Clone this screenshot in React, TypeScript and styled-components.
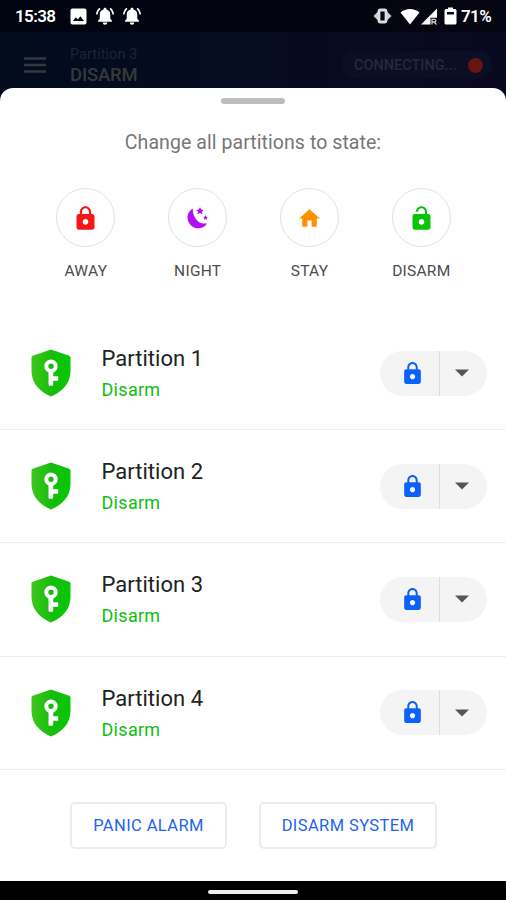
import React from 'react';
import styled, { createGlobalStyle } from 'styled-components';

const Global = createGlobalStyle`
  *, *::before, *::after { box-sizing: border-box; }
  body { margin: 0; background: #000; font-family: Roboto, "Liberation Sans", sans-serif; }
  svg { display: block; flex: none; }
  button { font-family: inherit; padding: 0; border: 0; background: none; }
`;

const Screen = styled.div`
  width: 506px;
  height: 900px;
  display: flex;
  flex-direction: column;
  overflow: hidden;
  background: linear-gradient(90deg, #020c1d 0%, #050b20 45%, #080a22 80%, #0a0820 100%) 0 0 / 100% 130px no-repeat #000;
`;

const StatusBar = styled.div`
  height: 32px;
  flex: none;
  display: flex;
  align-items: center;
  padding: 0 14px 0 15px;
  background: linear-gradient(90deg, #010511, #03040f 50%, #060512);
  color: #fff;
  font-size: 17px;
  font-weight: 600;
`;

const Clock = styled.span`
  width: 55px;
  letter-spacing: -0.6px;
`;

const StatusGroup = styled.div<{ $gap: number }>`
  display: flex;
  align-items: center;
  gap: ${(p) => p.$gap}px;
`;

const StatusRight = styled.div`
  display: flex;
  align-items: center;
  margin-left: auto;
`;

const Gap = styled.span<{ $w: number }>`
  width: ${(p) => p.$w}px;
`;

const Percent = styled.span`
  width: 31px;
  font-size: 17px;
  letter-spacing: -0.6px;
  white-space: nowrap;
`;

const Header = styled.header`
  height: 56px;
  flex: none;
  display: flex;
  align-items: center;
  padding: 10px 14px 0 24px;
`;

const Heading = styled.div`
  margin-left: 24px;
`;

const HeadingSmall = styled.div`
  font-size: 14.5px;
  line-height: 20px;
  letter-spacing: 0.05px;
  color: #1b2537;
`;

const HeadingLarge = styled.div`
  font-size: 18.5px;
  line-height: 21px;
  font-weight: 500;
  letter-spacing: -0.2px;
  color: #36383c;
`;

const Connection = styled.div`
  width: 151px;
  height: 28px;
  margin: 0 0 0 auto;
  display: flex;
  align-items: center;
  justify-content: space-between;
  padding: 0 9px 0 13px;
  border-radius: 14px;
  background: #0b0f25;
  color: #25293a;
  font-size: 14.5px;
  font-weight: 500;
`;

const Dot = styled.span`
  width: 15px;
  height: 15px;
  border-radius: 50%;
  background: #671510;
`;

const Sheet = styled.main`
  height: 793px;
  flex: none;
  display: flex;
  flex-direction: column;
  background: #fff;
  border-radius: 13px 13px 0 0;
`;

const Handle = styled.div`
  width: 64px;
  height: 6px;
  flex: none;
  margin: 10px auto 0;
  border-radius: 3px;
  background: #bdbdbd;
`;

const Title = styled.h1`
  margin: 26px 0 0;
  height: 26px;
  line-height: 26px;
  text-align: center;
  font-size: 19.5px;
  font-weight: 400;
  letter-spacing: 0.07px;
  color: #777;
`;

const States = styled.div`
  display: grid;
  grid-template-columns: repeat(4, 111.8px);
  margin: 32px 0 0 30px;
  height: 129px;
  flex: none;
`;

const StateItem = styled.div`
  display: flex;
  flex-direction: column;
  align-items: center;
`;

const Circle = styled.button`
  width: 59px;
  height: 59px;
  display: flex;
  align-items: center;
  justify-content: center;
  padding-top: 1px;
  border: 1px solid #e2e2e2;
  border-radius: 50%;
`;

const StateLabel = styled.span`
  margin-top: 14px;
  line-height: 20px;
  font-size: 15.5px;
  font-weight: 440;
  letter-spacing: 0.25px;
  color: #4c4c4c;
`;

const Row = styled.div`
  height: 113.2px;
  flex: none;
  display: flex;
  align-items: center;
  padding: 0 19px 0 31px;
  border-bottom: 1.5px solid #eeeeee;
`;

const RowText = styled.div`
  flex: 1;
  margin-left: 30.5px;
  padding-top: 2px;
`;

const Name = styled.div`
  font-size: 22px;
  line-height: 31px;
  letter-spacing: 0.02px;
  color: #222;
`;

const Status = styled.div`
  font-size: 18px;
  line-height: 31px;
  letter-spacing: 0.3px;
  color: #12bd12;
`;

const Split = styled.div`
  display: flex;
  width: 107px;
  height: 45px;
  border-radius: 23px;
  overflow: hidden;
  background: #f4f4f4;
`;

const SplitButton = styled.button<{ $w: number; $line?: boolean }>`
  width: ${(p) => p.$w}px;
  display: flex;
  align-items: center;
  justify-content: center;
  padding-left: ${(p) => (p.$line ? 5 : 0)}px;
  padding-right: ${(p) => (p.$line ? 0 : 3)}px;
  border-right: ${(p) => (p.$line ? '1.5px solid #dedede' : '0')};
`;

const Actions = styled.div`
  display: flex;
  gap: 32px;
  padding: 32px 0 0 70px;
`;

const Action = styled.button<{ $w: number }>`
  width: ${(p) => p.$w}px;
  height: 47px;
  border: 2px solid #ececec;
  border-radius: 5px;
  color: #1f64ee;
  font-size: 16.5px;
  letter-spacing: 0.4px;
  font-weight: 450;
`;

const NavBar = styled.div`
  flex: 1;
  display: flex;
  justify-content: center;
  align-items: flex-start;
  padding-top: 9px;
  background: #000;
`;

const NavPill = styled.div`
  width: 90px;
  height: 4px;
  border-radius: 2px;
  background: #eee;
`;

const LOCK =
  'M18 8h-1V6c0-2.76-2.24-5-5-5S7 3.24 7 6v2H6c-1.1 0-2 .9-2 2v10c0 1.1.9 2 2 2h12c1.1 0 2-.9 2-2V10c0-1.1-.9-2-2-2zm-6 9.500c-1.400 0-2.500-1.100-2.500-2.500s1.100-2.500 2.500-2.500 2.500 1.100 2.500 2.500-1.100 2.500-2.500 2.500zm3.100-9.500H8.900V6c0-1.710 1.390-3.100 3.100-3.100s3.100 1.390 3.100 3.100v2z';
const LOCK_OPEN =
  'M12 17.500c1.400 0 2.500-1.100 2.500-2.500s-1.100-2.500-2.500-2.500-2.500 1.100-2.500 2.500 1.100 2.500 2.500 2.500zm6-9.500h-1V6c0-2.760-2.240-5-5-5S7 3.240 7 6h1.900c0-1.710 1.390-3.100 3.100-3.100 1.710 0 3.100 1.390 3.100 3.100v2H6c-1.100 0-2 .9-2 2v10c0 1.100.9 2 2 2h12c1.100 0 2-.9 2-2V10c0-1.100-.9-2-2-2z';
const HOME = 'M10 20v-6h4v6h5v-8h3L12 3 2 12h3v8z';

const Glyph = ({ d, size, color }: { d: string; size: number; color: string }) => (
  <svg width={size} height={size} viewBox="0 0 24 24" fill={color} fillRule="evenodd">
    <path d={d} />
  </svg>
);

const Moon = () => (
  <svg width="24" height="24" viewBox="0 0 24 24" fill="#b40cf5">
    <path d="M6.800 2.500C2.900 4.700.9 8.800 1.700 13.200c1 5.500 5.900 9.400 11.300 9.100 3.700-.2 6.700-2.200 8-5.100-3.300 1-6.700.1-9.300-2.300C8.500 12 6.500 7.400 6.800 2.500z" />
    <path d="M14 1.200l1.200 2.300 2.600.4-1.900 1.800.5 2.600L14 7.100l-2.400 1.200.5-2.600-1.900-1.800 2.600-.4z" />
    <path d="M19.500 9.300l.8 1.500 1.600.2-1.200 1.100.3 1.700-1.500-.8-1.500.8.3-1.700-1.200-1.100 1.600-.2z" />
  </svg>
);

const Bell = () => (
  <svg width="18" height="18" viewBox="0 0 24 24" fill="#fff">
    <path d="M12 1c-1.200 0-2 .8-2 2v.4C6.800 4.200 5 7 5 10v5.700L2.800 18v1.800h18.400V18L19 15.700V10c0-3-1.800-5.800-5-6.600V3c0-1.200-.8-2-2-2zM9 20.500a3 3 0 0 0 6 0z" />
    <path d="M5.300 1.800C2.900 3.600 1.200 6.400 1 10M18.700 1.800c2.400 1.800 4.100 4.600 4.300 8.200" fill="none" stroke="#fff" strokeWidth="2" />
  </svg>
);

const Shield = () => (
  <svg width="40" height="48" viewBox="0 0 40 48">
    <defs>
      <linearGradient id="shield" x1="0" y1="0" x2="1" y2="0">
        <stop offset="0" stopColor="#3fc51f" />
        <stop offset=".55" stopColor="#14bd0a" />
        <stop offset="1" stopColor="#08c805" />
      </linearGradient>
    </defs>
    <path d="M20 .5 38.300 6.800Q39.500 7.300 39.500 8.600V22c0 12-8 21-19.500 25.500C8.500 43 .5 34 .5 22V8.600Q.5 7.300 1.700 6.800z" fill="url(#shield)" />
    <path d="M17.500 22h4.700v5.300h5v4.500h-5v3.500q0 1.500-1.200 1.500h-2.300q-1.200 0-1.200-1.500z" fill="#fff" />
    <circle cx="20" cy="17.200" r="4.700" fill="none" stroke="#fff" strokeWidth="4" />
  </svg>
);

const states = [
  { label: 'AWAY', icon: <Glyph d={LOCK} size={27} color="#f81616" /> },
  { label: 'NIGHT', icon: <Moon /> },
  { label: 'STAY', icon: <Glyph d={HOME} size={25} color="#ff9100" /> },
  { label: 'DISARM', icon: <Glyph d={LOCK_OPEN} size={27} color="#06c506" /> },
];

const partitions = ['Partition 1', 'Partition 2', 'Partition 3', 'Partition 4'];

export default function App() {
  return (
    <>
      <Global />
      <Screen>
        <StatusBar>
          <Clock>15:38</Clock>
          <StatusGroup $gap={9}>
            <svg width="17" height="17" viewBox="0 0 17 17">
              <path d="M2.500.5h12q2 0 2 2v12q0 2-2 2h-12q-2 0-2-2v-12q0-2 2-2zM3 13h11l-3.600-4.800-2.600 3.300-1.900-2.200z" fill="#fff" fillRule="evenodd" />
            </svg>
            <Bell />
            <Bell />
          </StatusGroup>
          <StatusRight>
            <svg width="19" height="16" viewBox="0 0 19 16">
              <path d="M.5 8 5 3.500v9zM18.500 8 14 3.500v9z" fill="#ccc" />
              <rect x="6" y="2" width="7" height="12" rx="1.500" fill="none" stroke="#ddd" strokeWidth="2.800" />
            </svg>
            <Gap $w={8} />
            <svg width="20" height="17" viewBox="0 0 20 17">
              <path d="M10 16.500.5 4.600C5.500-.2 14.500-.2 19.500 4.600z" fill="#fff" />
            </svg>
            <Gap $w={1} />
            <svg width="17" height="17" viewBox="0 0 17 17">
              <path d="M16 .5v9.300H9.500v6.700H0z" fill="#fff" />
              <path d="M11 16.500v-5.200h2.500a1.300 1.300 0 0 1 0 2.700H11m2 0 2.500 2.500" fill="none" stroke="#ccc" strokeWidth="1.300" />
            </svg>
            <Gap $w={6} />
            <svg width="13" height="18" viewBox="0 0 13 18">
              <path d="M4 .5h5V2h2q1.500 0 1.500 1.500v12.500q0 1.500-1.500 1.500H2Q.5 17.500.5 16V3.500Q.5 2 2 2h2zM3 5v2.500h7V5z" fill="#fff" fillRule="evenodd" />
            </svg>
            <Gap $w={4} />
            <Percent>71%</Percent>
          </StatusRight>
        </StatusBar>
        <Header>
          <svg width="22" height="16" viewBox="0 0 22 16">
            <path d="M0 1.500h22M0 8h22M0 14.500h22" stroke="#34383e" strokeWidth="2.300" />
          </svg>
          <Heading>
            <HeadingSmall>Partition 3</HeadingSmall>
            <HeadingLarge>DISARM</HeadingLarge>
          </Heading>
          <Connection>
            CONNECTING...
            <Dot />
          </Connection>
        </Header>
        <Sheet>
          <Handle />
          <Title>Change all partitions to state:</Title>
          <States>
            {states.map((s) => (
              <StateItem key={s.label}>
                <Circle aria-label={s.label}>{s.icon}</Circle>
                <StateLabel>{s.label}</StateLabel>
              </StateItem>
            ))}
          </States>
          {partitions.map((name) => (
            <Row key={name}>
              <Shield />
              <RowText>
                <Name>{name}</Name>
                <Status>Disarm</Status>
              </RowText>
              <Split>
                <SplitButton $w={60} $line aria-label="Lock">
                  <Glyph d={LOCK} size={25} color="#0b62fb" />
                </SplitButton>
                <SplitButton $w={47} aria-label="More">
                  <svg width="14" height="8" viewBox="0 0 14 8">
                    <path d="M0 .5h14L7 7.500z" fill="#555" />
                  </svg>
                </SplitButton>
              </Split>
            </Row>
          ))}
          <Actions>
            <Action $w={157}>PANIC ALARM</Action>
            <Action $w={178}>DISARM SYSTEM</Action>
          </Actions>
        </Sheet>
        <NavBar>
          <NavPill />
        </NavBar>
      </Screen>
    </>
  );
}
